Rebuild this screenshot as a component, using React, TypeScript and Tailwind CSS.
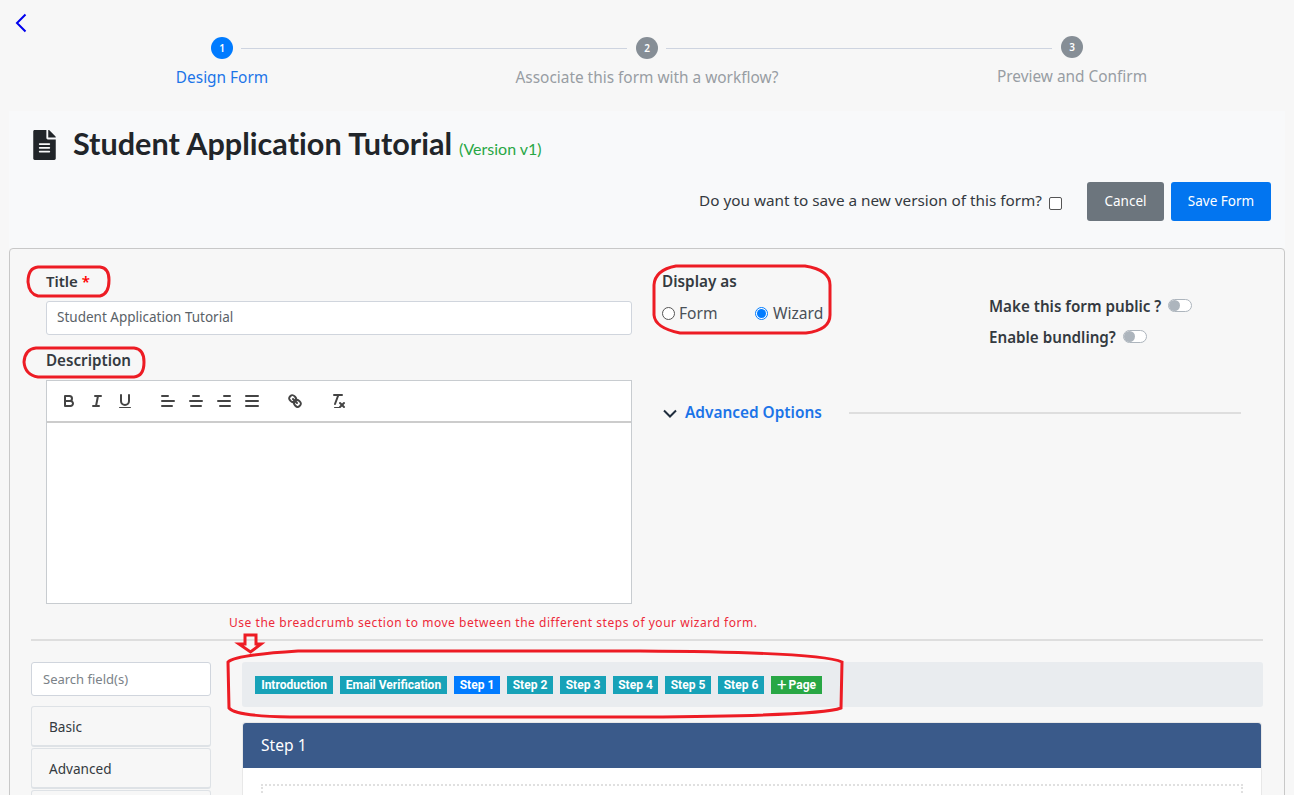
import React from "react";
import { FaFileAlt } from "react-icons/fa";

const Q = ({ children }: { children: React.ReactNode }) => (
  <button className="w-[28px] h-[24px] flex items-center justify-center shrink-0">
    <svg width="18" height="18" viewBox="0 0 18 18" fill="none" stroke="#444" strokeWidth="2" strokeLinecap="round" strokeLinejoin="round">
      {children}
    </svg>
  </button>
);

const Toolbar = () => (
  <div className="h-[42px] border-b-2 border-[#ccc] bg-white px-[8px] flex items-center gap-[15px]">
    <div className="flex">
      <Q>
        <path d="M5,4H9.5A2.5,2.5,0,0,1,12,6.5v0A2.5,2.5,0,0,1,9.5,9H5A0,0,0,0,1,5,9V4A0,0,0,0,1,5,4Z" />
        <path d="M5,9h5.5A2.5,2.5,0,0,1,13,11.5v0A2.5,2.5,0,0,1,10.5,14H5a0,0,0,0,1,0,0V9A0,0,0,0,1,5,9Z" />
      </Q>
      <Q>
        <line x1="7" x2="13" y1="4" y2="4" />
        <line x1="5" x2="11" y1="14" y2="14" />
        <line x1="8" x2="10" y1="14" y2="4" />
      </Q>
      <Q>
        <path d="M5,3V9a4.012,4.012,0,0,0,4,4H9a4.012,4.012,0,0,0,4-4V3" />
        <rect x="3" y="15" width="12" height="1" rx="0.5" fill="#444" stroke="none" />
      </Q>
    </div>
    <div className="flex">
      <Q>
        <line x1="3" x2="15" y1="9" y2="9" />
        <line x1="3" x2="13" y1="14" y2="14" />
        <line x1="3" x2="9" y1="4" y2="4" />
      </Q>
      <Q>
        <line x1="15" x2="3" y1="9" y2="9" />
        <line x1="14" x2="4" y1="14" y2="14" />
        <line x1="12" x2="6" y1="4" y2="4" />
      </Q>
      <Q>
        <line x1="15" x2="3" y1="9" y2="9" />
        <line x1="15" x2="5" y1="14" y2="14" />
        <line x1="15" x2="9" y1="4" y2="4" />
      </Q>
      <Q>
        <line x1="15" x2="3" y1="9" y2="9" />
        <line x1="15" x2="3" y1="14" y2="14" />
        <line x1="15" x2="3" y1="4" y2="4" />
      </Q>
    </div>
    <Q>
      <line x1="7" x2="11" y1="7" y2="11" />
      <path d="M8.9,4.577a3.476,3.476,0,0,1,.36,4.679A3.476,3.476,0,0,1,4.577,8.9C3.185,7.5,2.035,6.4,4.217,4.217S7.5,3.185,8.9,4.577Z" />
      <path d="M13.423,9.1a3.476,3.476,0,0,0-4.679-.36,3.476,3.476,0,0,0,.36,4.679c1.392,1.392,2.5,2.542,4.679.36S14.815,10.5,13.423,9.1Z" />
    </Q>
    <Q>
      <line x1="5" x2="13" y1="3" y2="3" />
      <line x1="6" x2="9.35" y1="12" y2="3" />
      <line x1="11" x2="15" y1="11" y2="15" />
      <line x1="15" x2="11" y1="11" y2="15" />
      <rect x="5" y="15" width="6" height="1" rx="0.5" fill="#444" stroke="none" />
    </Q>
  </div>
);

const Step = ({ n, label, active, last, up }: { n: number; label: string; active?: boolean; last?: boolean; up?: boolean }) => (
  <div className="w-[425px] flex flex-col items-center relative">
    <div className={`w-[22px] h-[22px] rounded-full flex items-center justify-center text-white text-[10px] font-semibold ${active ? "bg-[#007bff]" : "bg-[#868e96]"} ${up ? "-mt-[1px]" : ""}`}>
      {n}
    </div>
    {!last && <div className="absolute left-[231px] top-[11px] w-[386px] h-px bg-[#ced4e0]" />}
    <div className={`text-[15.4px] leading-[20px] mt-[9px] ${active ? "text-[#1b74e8]" : "text-[#989da3]"}`}>{label}</div>
  </div>
);

const Toggle = () => (
  <span className="inline-flex items-center w-[24px] h-[13px] rounded-full border border-[#adb5bd] bg-white ml-[7px] align-middle">
    <span className="w-[11px] h-[11px] rounded-full bg-[#adb5bd]" />
  </span>
);

const Crumb = ({ children, w, on, green }: { children: React.ReactNode; w: string; on?: boolean; green?: boolean }) => (
  <span className={`h-[18px] flex items-center justify-center text-white font-['Roboto',sans-serif] text-[12px] font-bold whitespace-nowrap ${w} ${green ? "bg-[#28a745]" : on ? "bg-[#007bff]" : "bg-[#17a2b8]"}`}>
    {children}
  </span>
);

const Acc = ({ children }: { children?: React.ReactNode }) => (
  <div className="h-[41px] shrink-0 rounded-[3px] border border-[#dee2e6] border-b-2 bg-[#f7f7f7] pl-[17px] flex items-center text-[13.6px] text-[#343a40]">
    <span className="mt-[2px]">{children}</span>
  </div>
);

export default function App() {
  return (
    <div className="relative h-[795px] overflow-hidden bg-[#f7f7f7] font-['Noto_Sans',sans-serif] text-[#212529]">
      <div className="h-[36px] pl-[14px] pt-[13px]">
        <svg width="15" height="20" viewBox="0 0 15 20" fill="none" stroke="#0000ee" strokeWidth="2">
          <path d="M11.5 1.5 L3 10 L11.5 18.5" />
        </svg>
      </div>
      <div className="flex pl-[9.5px] h-[75px] pt-[1px]">
        <Step n={1} label="Design Form" active />
        <Step n={2} label="Associate this form with a workflow?" />
        <Step n={3} label="Preview and Confirm" last up />
      </div>

      <div className="mx-[9px] h-[137px] bg-[#f8f9fa] flex flex-col">
        <div className="h-[71px] pl-[24px] flex items-center gap-[17px]">
          <FaFileAlt className="text-[#212529] w-[23px] h-[30px] shrink-0 -mt-[4px]" />
          <div className="flex items-baseline gap-[7px] -mt-[6px]">
            <span className="font-['Lato',sans-serif] font-bold text-[30.6px] text-[#212529] [font-variant-ligatures:none]">Student Application Tutorial</span>
            <span className="font-['Lato',sans-serif] text-[16px] text-[#28a745]">(Version v1)</span>
          </div>
        </div>
        <div className="flex justify-end items-center pr-[14px]">
          <span className="text-[15.3px] text-[#343a40] -mt-[2px]">Do you want to save a new version of this form?</span>
          <span className="w-[13px] h-[13px] border border-[#555] rounded-[2px] bg-white ml-[7px] mr-[25px] mt-[3px]" />
          <button className="w-[77px] h-[39px] rounded-[3px] bg-[#6c757d] text-white text-[13.5px]">Cancel</button>
          <button className="w-[100px] h-[39px] rounded-[3px] bg-[#0275f0] text-white text-[13.5px] ml-[7px]">Save Form</button>
        </div>
      </div>

      <div className="mx-[9px] h-[600px] border border-[#c8c8c8] rounded-[4px] px-[21px]">
        <div className="flex pt-[21px]">
          <div className="w-[601px] pl-[15px] shrink-0">
            <div className="text-[15px] font-semibold text-[#343a40] leading-[22px]">
              Title <span className="text-[#ff0000]">*</span>
            </div>
            <div className="mt-[9px] h-[34px] w-[586px] border border-[#d0d5dd] rounded-[3px] bg-white pl-[10px] flex items-center text-[13.5px] text-[#5a6268]">
              <span className="-mt-[2px]">Student Application Tutorial</span>
            </div>
            <div className="text-[15.2px] font-semibold text-[#343a40] leading-[22px] mt-[14px]">Description</div>
            <div className="mt-[9px] w-[586px] h-[224px] border border-[#c8ccd0] bg-white">
              <Toolbar />
            </div>
          </div>
          <div className="flex-1 pl-[30px] flex flex-col">
            <div className="flex">
              <div className="w-[327px] shrink-0">
                <div className="text-[15.3px] font-semibold text-[#343a40] leading-[22px]">Display as</div>
                <div className="flex items-center mt-[10px] h-[22px] text-[15.6px] text-[#495057]">
                  <span className="w-[13px] h-[13px] rounded-full border border-[#555] bg-white" />
                  <span className="ml-[4px] w-[76px] mt-[2px]">Form</span>
                  <span className="w-[13px] h-[13px] rounded-full border border-[#007bff] bg-white flex items-center justify-center">
                    <span className="w-[9px] h-[9px] rounded-full bg-[#007bff]" />
                  </span>
                  <span className="ml-[5px] mt-[2px]">Wizard</span>
                </div>
              </div>
              <div className="pt-[24px] text-[15.2px] font-semibold text-[#343a40]">
                <div className="h-[22px] flex items-center">
                  <span className="mt-[2px]">Make this form public ?</span>
                  <Toggle />
                </div>
                <div className="h-[22px] mt-[9px] flex items-center">
                  <span className="mt-[2px]">Enable bundling?</span>
                  <Toggle />
                </div>
              </div>
            </div>
            <div className="flex items-center mt-[55px] h-[22px]">
              <svg width="14" height="9" viewBox="0 0 14 9" fill="none" stroke="#1f2d3d" strokeWidth="2" className="ml-[1px]">
                <path d="M1 1.5 L7 7.5 L13 1.5" />
              </svg>
              <span className="ml-[8px] text-[15.4px] font-semibold text-[#1b74e8]">Advanced Options</span>
              <div className="ml-[27px] w-[392px] h-[2px] bg-[#dedede]" />
            </div>
          </div>
        </div>

        <div className="mt-[11px] pl-[198px] text-[12px] leading-[16px] tracking-[0.535px] text-[#ed2939] whitespace-nowrap">
          Use the breadcrumb section to move between the different steps of your wizard form.
        </div>
        <div className="mt-[8px] h-[2px] bg-[#dedede]" />

        <div className="flex mt-[21px] gap-[31px]">
          <div className="w-[180px] shrink-0 flex flex-col gap-[1px]">
            <div className="h-[34px] mb-[9px] border border-[#d0d5dd] rounded-[3px] bg-white pl-[11px] flex items-center text-[13px] text-[#7b8288]">
              <span className="mt-[1px]">Search field(s)</span>
            </div>
            <Acc>Basic</Acc>
            <Acc>Advanced</Acc>
            <Acc />
          </div>
          <div className="flex-1">
            <div className="h-[45px] rounded-[3px] bg-[#e9ecef] pl-[13px] flex items-center gap-[7px]">
              <Crumb w="w-[78px]">Introduction</Crumb>
              <Crumb w="w-[107px]">Email Verification</Crumb>
              <Crumb w="w-[46px]" on>Step 1</Crumb>
              <Crumb w="w-[46px]">Step 2</Crumb>
              <Crumb w="w-[46px]">Step 3</Crumb>
              <Crumb w="w-[45px]">Step 4</Crumb>
              <Crumb w="w-[46px]">Step 5</Crumb>
              <Crumb w="w-[46px]">Step 6</Crumb>
              <Crumb w="w-[51px]" green>
                <span className="text-[17px] leading-none mr-[2px] font-normal">+</span>Page
              </Crumb>
            </div>
            <div className="mt-[15px] mr-[1px] rounded-t-[3px] border border-[#e8e8e8] bg-white h-[200px]">
              <div className="h-[45px] bg-[#3a5a8a] rounded-t-[3px] pl-[18px] flex items-center text-white text-[15.6px]">Step 1</div>
              <div className="mx-[18px] mt-[16px] h-[100px] border-2 border-dotted border-[#e0e0e0]" />
            </div>
          </div>
        </div>
      </div>

      <svg className="absolute inset-0 pointer-events-none" width="1294" height="795" fill="none" stroke="#ed1c24" strokeWidth="3">
        <path d="M38 267 H100 Q109 268 109 280 Q109 294 100 296 H38 Q29 294 28 282 Q28 268 38 267Z" />
        <path d="M36 348 H134 Q144 349 144 362 Q144 376 134 377 H38 Q25 375 24 362 Q25 349 36 348Z" />
        <path d="M676 266 H805 Q830 270 830 285 V315 Q830 330 806 333 H680 Q655 328 654 315 V285 Q655 270 676 266Z" />
        <path d="M298 651 H640 Q820 652 842 662 L841 708 Q820 716 645 717 H290 Q235 716 229 708 L228 662 Q235 655 298 651Z" />
        <path d="M245 635 H256 V644 H261 L250.5 652 L239 644 H245 Z" />
      </svg>
    </div>
  );
}
